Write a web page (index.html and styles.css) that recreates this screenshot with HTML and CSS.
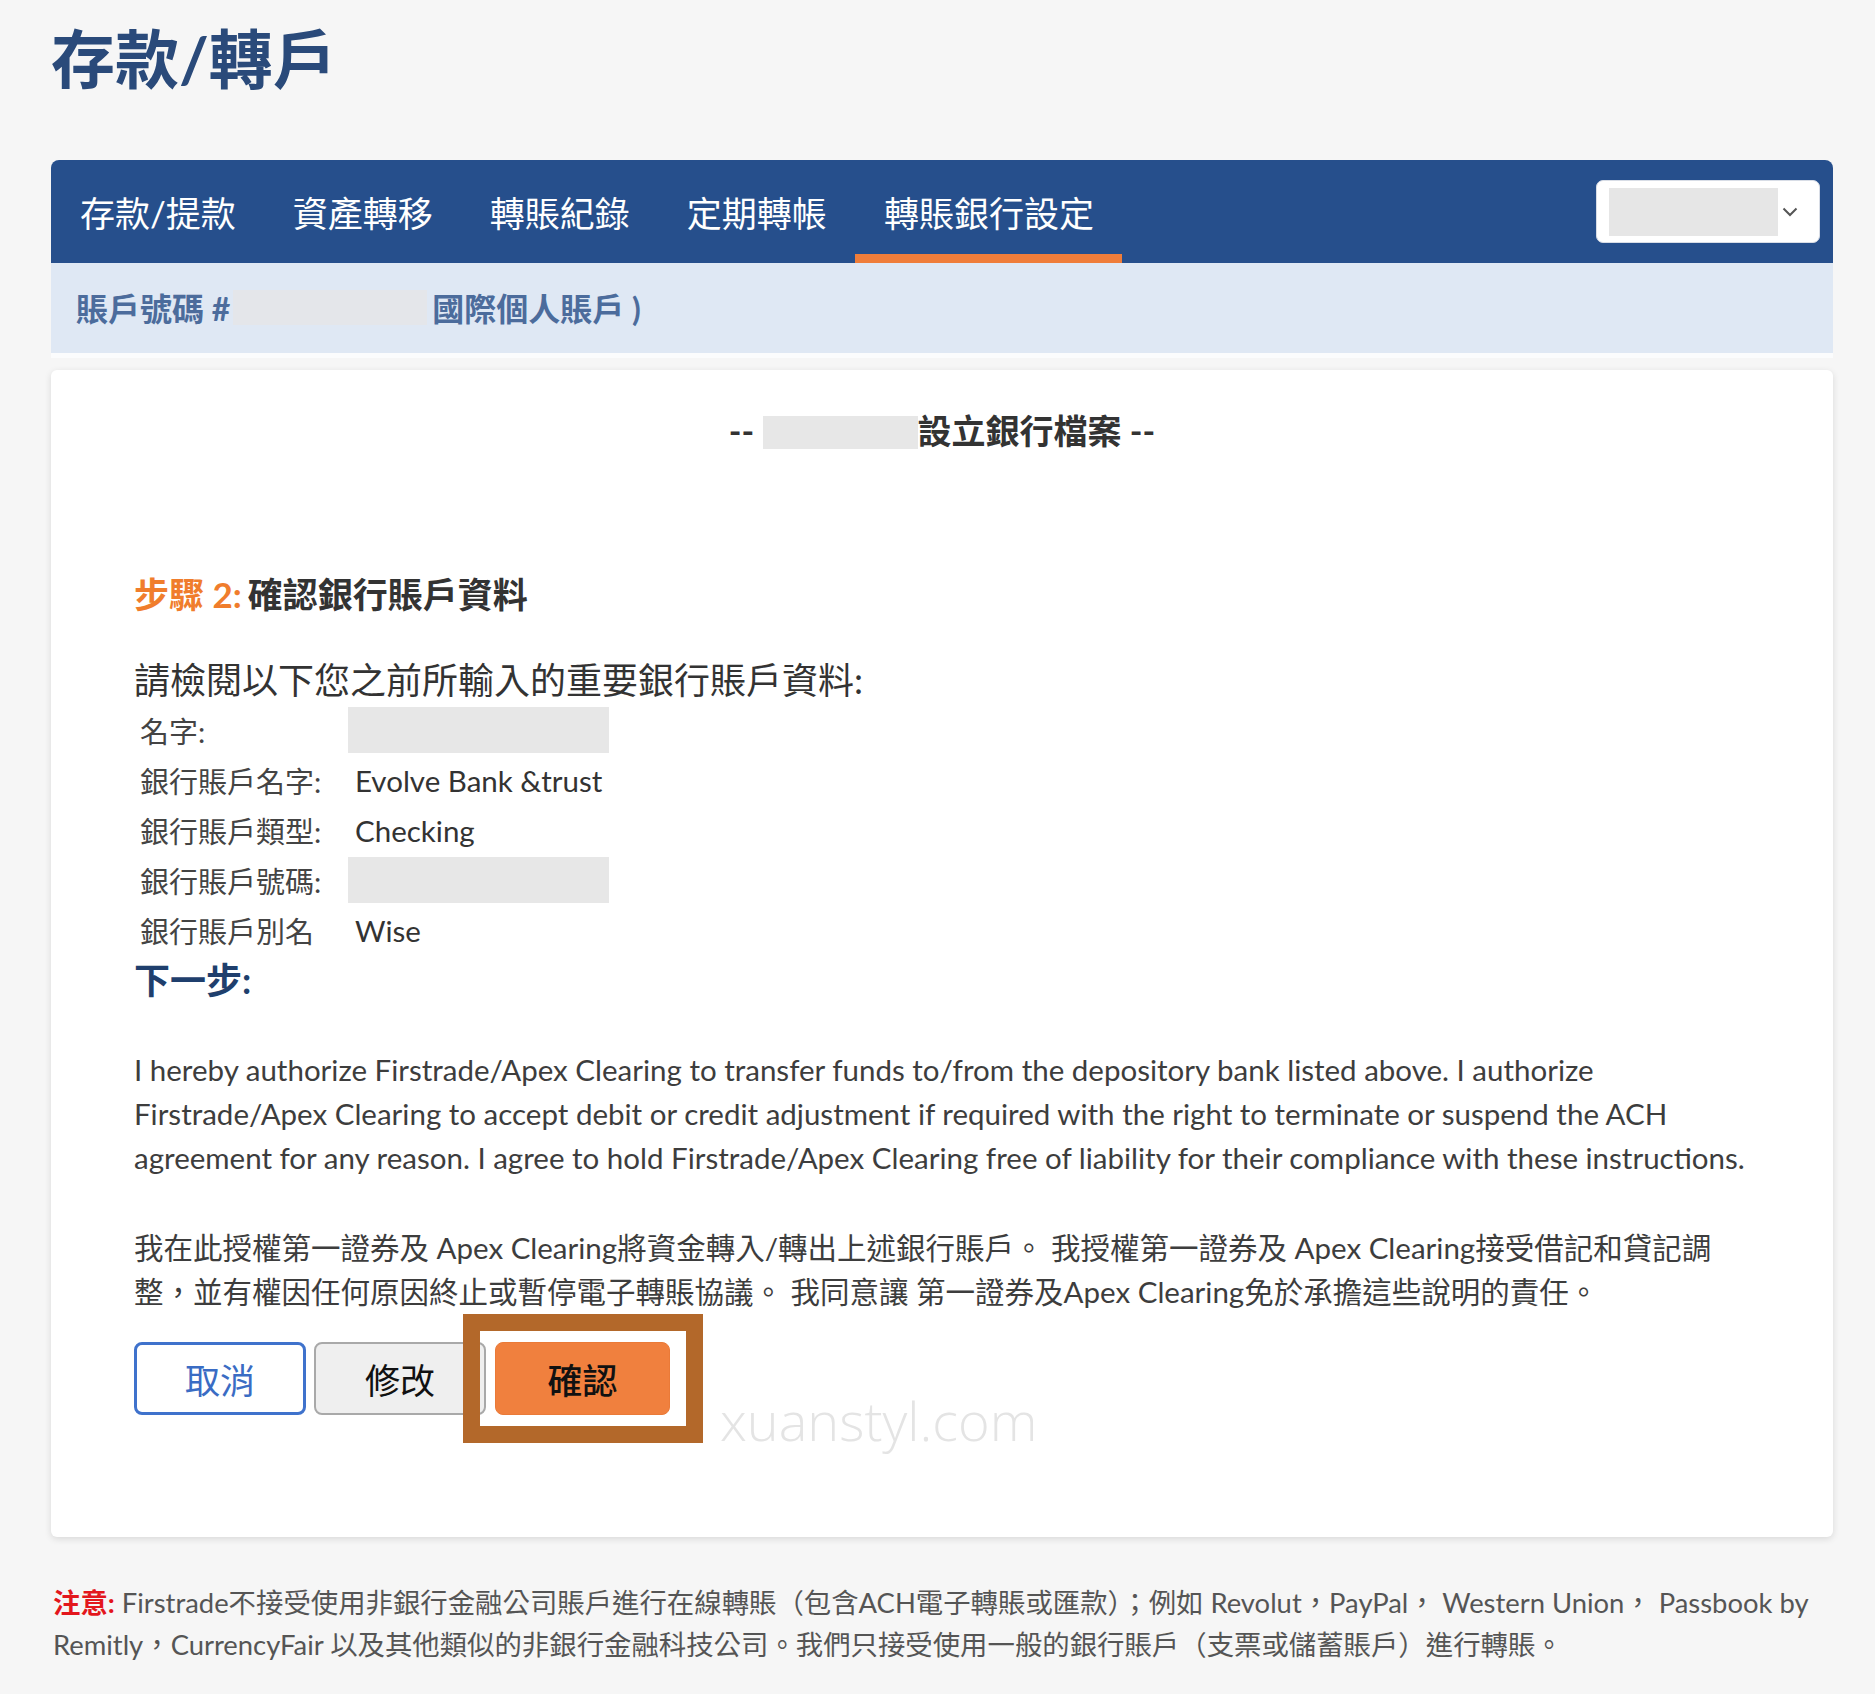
FILE: index.html
```html
<!DOCTYPE html>
<html lang="zh-Hant">
<head>
<meta charset="utf-8">
<title>存款/轉戶</title>
<link rel="stylesheet" href="styles.css">
</head>
<body>
<div class="page">
  <h1 class="title">存款/轉戶</h1>

  <nav class="tabs">
    <div class="tab-list">
      <a class="tab">存款/提款</a>
      <a class="tab">資產轉移</a>
      <a class="tab">轉賬紀錄</a>
      <a class="tab">定期轉帳</a>
      <a class="tab active">轉賬銀行設定</a>
    </div>
    <div class="select">
      <span class="select-value"></span>
      <svg class="chevron" width="16" height="10" viewBox="0 0 16 10"><polyline points="1.5,1.5 8,8 14.5,1.5" fill="none" stroke="#555" stroke-width="2"/></svg>
    </div>
  </nav>

  <div class="account-bar">賬戶號碼 #<span class="redact redact-acct"></span>國際個人賬戶 )</div>

  <section class="card">
    <div class="card-title">-- <span class="redact redact-title"></span>設立銀行檔案 --</div>

    <h2 class="step"><span class="step-num">步驟 2:</span>確認銀行賬戶資料</h2>

    <p class="intro">請檢閱以下您之前所輸入的重要銀行賬戶資料:</p>

    <div class="details">
      <div class="label">名字:</div>
      <div class="value"><span class="redact redact-field"></span></div>
      <div class="label">銀行賬戶名字:</div>
      <div class="value text">Evolve Bank &amp;trust</div>
      <div class="label">銀行賬戶類型:</div>
      <div class="value text">Checking</div>
      <div class="label">銀行賬戶號碼:</div>
      <div class="value"><span class="redact redact-field"></span></div>
      <div class="label">銀行賬戶別名</div>
      <div class="value text">Wise</div>
    </div>

    <h3 class="next">下一步:</h3>

    <p class="auth">I hereby authorize Firstrade/Apex Clearing to transfer funds to/from the depository bank listed above. I authorize<br>Firstrade/Apex Clearing to accept debit or credit adjustment if required with the right to terminate or suspend the ACH<br>agreement for any reason. I agree to hold Firstrade/Apex Clearing free of liability for their compliance with these instructions.</p>

    <p class="auth auth-zh">我在此授權第一證券及 Apex Clearing將資金轉入/轉出上述銀行賬戶。 我授權第一證券及 Apex Clearing接受借記和貸記調<br>整，並有權因任何原因終止或暫停電子轉賬協議。 我同意讓 第一證券及Apex Clearing免於承擔這些說明的責任。</p>

    <div class="actions">
      <button class="btn btn-cancel">取消</button>
      <button class="btn btn-edit">修改</button>
      <div class="confirm-wrap">
        <button class="btn btn-confirm">確認</button>
        <span class="highlight"></span>
      </div>
      <span class="watermark">xuanstyl.com</span>
    </div>
  </section>

  <p class="note"><span class="note-label">注意:</span> Firstrade不接受使用非銀行金融公司賬戶進行在線轉賬（包含ACH電子轉賬或匯款）；例如 Revolut，PayPal， Western Union， Passbook by<br>Remitly，CurrencyFair 以及其他類似的非銀行金融科技公司。我們只接受使用一般的銀行賬戶（支票或儲蓄賬戶）進行轉賬。</p>
</div>
</body>
</html>
```

FILE: styles.css
```css
* { box-sizing: border-box; }

html, body {
  margin: 0;
  padding: 0;
  background: #f6f6f6;
}

body {
  font-family: Lato, "Noto Sans CJK TC", sans-serif;
  color: #333;
}

.page {
  width: 1875px;
  padding: 0 42px 0 51px;
}

.title {
  margin: 0;
  padding-top: 21px;
  font-size: 64px;
  line-height: 76px;
  font-weight: 700;
  color: #2a4a7a;
}

.tabs {
  margin-top: 63px;
  height: 103px;
  background: #264f8c;
  border-radius: 8px 8px 0 0;
  display: flex;
  align-items: stretch;
  justify-content: space-between;
  padding-right: 13px;
}

.tab-list {
  display: flex;
  align-items: stretch;
}

.tab {
  display: flex;
  align-items: center;
  padding: 9px 28px 0 29px;
  border-bottom: 9px solid transparent;
  font-size: 35px;
  color: #fff;
  white-space: nowrap;
}

.tab.active {
  border-bottom-color: #ef7d3a;
}

.select {
  align-self: center;
  width: 224px;
  height: 63px;
  background: #fff;
  border: 1px solid #d8dde6;
  border-radius: 7px;
  display: flex;
  align-items: center;
  padding-left: 12px;
}

.select-value {
  width: 169px;
  height: 48px;
  background: #e6e6e6;
}

.chevron {
  margin-left: 4px;
}

.account-bar {
  height: 95px;
  background: #dfe8f4;
  border-bottom: 5px solid #fbfcfd;
  display: flex;
  align-items: center;
  padding: 0 0 2px 25px;
  font-size: 32px;
  font-weight: 700;
  color: #4c6c9c;
  white-space: nowrap;
}

.redact {
  display: inline-block;
  background: #e7e7e7;
}

.redact-acct {
  width: 194px;
  height: 35px;
  margin: 0 5px 0 3px;
  background: #e4e6ea;
}

.card {
  position: relative;
  margin-top: 12px;
  background: #fff;
  border-radius: 6px;
  box-shadow: 0 2px 7px rgba(0, 0, 0, 0.12);
  padding: 39px 60px 122px 83px;
}

.card-title {
  text-align: center;
  font-size: 34px;
  line-height: 44px;
  font-weight: 700;
  color: #333;
  padding-right: 23px;
}

.redact-title {
  width: 155px;
  height: 33px;
  vertical-align: -5px;
}

.step {
  margin: 117px 0 0;
  font-size: 35px;
  line-height: 48px;
  font-weight: 700;
  color: #333;
}

.step-num {
  color: #f07d2c;
  margin-right: 6px;
}

.intro {
  margin: 40px 0 0;
  font-size: 36px;
  line-height: 44px;
  color: #333;
}

.details {
  margin-top: 3px;
  padding-left: 6px;
  display: grid;
  grid-template-columns: 208px auto;
  grid-auto-rows: 50px;
  align-items: center;
}

.label {
  font-size: 29px;
  color: #444;
  white-space: nowrap;
}

.value {
  font-size: 29.5px;
  color: #333;
}

.value.text {
  padding-left: 7px;
}

.redact-field {
  width: 261px;
  height: 46px;
  vertical-align: middle;
}

.next {
  margin: 3px 0 0;
  font-size: 36px;
  line-height: 44px;
  font-weight: 700;
  color: #1f3f6d;
}

.auth {
  margin: 46px 0 0;
  font-size: 29.5px;
  line-height: 44px;
  color: #3d3d3d;
  white-space: nowrap;
}

.auth-zh {
  margin-top: 46px;
}

.actions {
  position: relative;
  margin-top: 28px;
  display: flex;
  gap: 8px;
}

.btn {
  height: 73px;
  border-radius: 8px;
  font-family: Lato, "Noto Sans CJK TC", sans-serif;
  font-size: 35px;
  padding: 0;
}

.btn-cancel {
  width: 172px;
  background: #fff;
  border: 3px solid #3f72cc;
  color: #3a6cc4;
}

.btn-edit {
  width: 172px;
  background: #efefef;
  border: 2px solid #a9a9a9;
  color: #111;
}

.confirm-wrap {
  position: relative;
  margin-left: 1px;
}

.btn-confirm {
  width: 175px;
  background: #f0803e;
  border: 1px solid #ea7a38;
  color: #111;
  font-weight: 500;
}

.highlight {
  position: absolute;
  left: -32px;
  top: -28px;
  width: 240px;
  height: 129px;
  border: 17px solid #b3682a;
}

.watermark {
  position: absolute;
  left: 586px;
  top: 56px;
  font-family: "Open Sans", sans-serif;
  font-weight: 300;
  font-size: 54px;
  line-height: 44px;
  color: #e4e4e4;
  white-space: nowrap;
}

.note {
  margin: 45px 0 0;
  padding-left: 2px;
  padding-bottom: 30px;
  font-size: 27.4px;
  line-height: 42px;
  color: #555;
  white-space: nowrap;
}

.note-label {
  color: #e3161c;
  font-weight: 700;
}
```
